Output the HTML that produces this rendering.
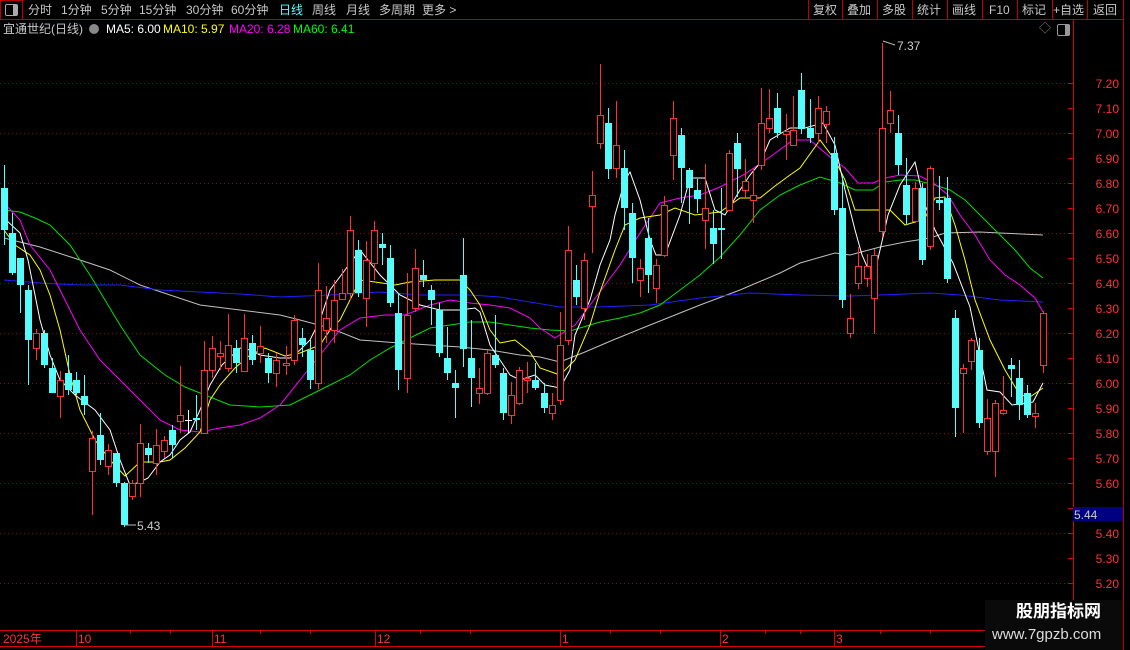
<!DOCTYPE html><html><head><meta charset="utf-8"><style>
body{margin:0;background:#000;width:1130px;height:650px;overflow:hidden;font-family:"Liberation Sans","Noto Sans CJK SC",sans-serif;}
.t{position:absolute;font-size:12px;color:#c8c8c8;white-space:nowrap;line-height:14px}
</style></head><body>
<div style="position:absolute;left:0;top:0;width:1130px;height:650px">
<div style="position:absolute;left:0;top:0;width:21px;height:18px;border:1px solid #b00;"></div>
<div style="position:absolute;left:5px;top:4px;width:11px;height:10px;border:1px solid #aaa;border-radius:2px"><div style="position:absolute;right:0;top:0;width:4px;height:10px;background:#aaa"></div></div>
<div style="position:absolute;left:0;top:19px;width:1123px;height:1px;background:#b00"></div>
<div style="position:absolute;left:1123px;top:0;width:1px;height:650px;background:#b00"></div>
<svg width="1130" height="20" style="position:absolute;left:0;top:0"><path stroke="#b00" d="M808.5 0V19M842.5 0V19M877.5 0V19M912.5 0V19M947.5 0V19M982.5 0V19M1017.5 0V19M1052.5 0V19M1087.5 0V19"/></svg>
<div class="t" style="left:28px;top:3px">分时</div>
<div class="t" style="left:61px;top:3px">1分钟</div>
<div class="t" style="left:101px;top:3px">5分钟</div>
<div class="t" style="left:139px;top:3px">15分钟</div>
<div class="t" style="left:186px;top:3px">30分钟</div>
<div class="t" style="left:231px;top:3px">60分钟</div>
<div class="t" style="left:279px;top:3px;color:#54ffff">日线</div>
<div class="t" style="left:312px;top:3px">周线</div>
<div class="t" style="left:346px;top:3px">月线</div>
<div class="t" style="left:379px;top:3px">多周期</div>
<div class="t" style="left:422px;top:3px">更多 &gt;</div>
<div class="t" style="left:813px;top:3px">复权</div>
<div class="t" style="left:847px;top:3px">叠加</div>
<div class="t" style="left:882px;top:3px">多股</div>
<div class="t" style="left:917px;top:3px">统计</div>
<div class="t" style="left:952px;top:3px">画线</div>
<div class="t" style="left:989px;top:3px">F10</div>
<div class="t" style="left:1022px;top:3px">标记</div>
<div class="t" style="left:1053px;top:3px">+自选</div>
<div class="t" style="left:1093px;top:3px">返回</div>
<div class="t" style="left:3px;top:22px">宜通世纪(日线)</div>
<div style="position:absolute;left:89px;top:24px;width:10px;height:10px;border-radius:50%;background:#888"></div>
<div class="t" style="left:106px;top:22px;color:#fff">MA5: 6.00</div>
<div class="t" style="left:163px;top:22px;color:#ff0">MA10: 5.97</div>
<div class="t" style="left:229px;top:22px;color:#f0f">MA20: 6.28</div>
<div class="t" style="left:293px;top:22px;color:#0f0">MA60: 6.41</div>
<div class="t" style="left:1039px;top:21px;color:#888">◇</div>
<div style="position:absolute;left:1057px;top:24px;width:11px;height:10px;border:1px solid #999;border-radius:2px"><div style="position:absolute;right:0;top:0;width:4px;height:10px;background:#999"></div></div>
<svg width="1130" height="650" style="position:absolute;left:0;top:0">
<g stroke="#7a1010" stroke-dasharray="1,3">
<path d="M0 83.5H1073M0 133.5H1073M0 183.5H1073M0 233.5H1073M0 283.5H1073M0 333.5H1073M0 383.5H1073M0 433.5H1073M0 483.5H1073M0 533.5H1073M0 583.5H1073"/>
</g>
<path d="M1073.5 20V628" stroke="#d00"/>
<path stroke="#d00" d="M1068 83.5h5M1068 108.5h5M1068 133.5h5M1068 158.5h5M1068 183.5h5M1068 208.5h5M1068 233.5h5M1068 258.5h5M1068 283.5h5M1068 308.5h5M1068 333.5h5M1068 358.5h5M1068 383.5h5M1068 408.5h5M1068 433.5h5M1068 458.5h5M1068 483.5h5M1068 508.5h5M1068 533.5h5M1068 558.5h5M1068 583.5h5"/>
<g fill="#ff3232" font-size="12" font-family="Liberation Sans,sans-serif" text-anchor="end">
<text x="1119" y="88">7.20</text><text x="1119" y="113">7.10</text><text x="1119" y="138">7.00</text><text x="1119" y="163">6.90</text><text x="1119" y="188">6.80</text><text x="1119" y="213">6.70</text><text x="1119" y="238">6.60</text><text x="1119" y="263">6.50</text><text x="1119" y="288">6.40</text><text x="1119" y="313">6.30</text><text x="1119" y="338">6.20</text><text x="1119" y="363">6.10</text><text x="1119" y="388">6.00</text><text x="1119" y="413">5.90</text><text x="1119" y="438">5.80</text><text x="1119" y="463">5.70</text><text x="1119" y="488">5.60</text><text x="1119" y="538">5.40</text><text x="1119" y="563">5.30</text><text x="1119" y="588">5.20</text>
</g>
<rect x="1073" y="507" width="50" height="14" fill="#000080"/>
<text x="1074" y="519" fill="#ccc" font-size="12" font-family="Liberation Sans,sans-serif">5.44</text>
<path d="M0 630.5H985M0 646.5H985" stroke="#d00"/>
<path d="M76.5 630V646M212.5 630V646M375.5 630V646M560.5 630V646M720.5 630V646M834.5 630V646M130.5 631v3M170.5 631v3M260.5 631v3M310.5 631v3M420.5 631v3M470.5 631v3M610.5 631v3M660.5 631v3M765.5 631v3M800.5 631v3M880.5 631v3M930.5 631v3" stroke="#d00"/>
<g fill="#ff3232" font-size="12" font-family="Liberation Sans,Noto Sans CJK SC,sans-serif">
<text x="3" y="643">2025年</text><text x="78" y="643">10</text><text x="214" y="643">11</text><text x="377" y="643">12</text><text x="562" y="643">1</text><text x="722" y="643">2</text><text x="836" y="643">3</text>
</g>
<g fill="none" stroke-width="1">
<polyline stroke="#c0c0c0" points="4,238 40,247 80,260 110,270 140,285 170,295 200,305 240,310 280,315 300,320 330,328 360,340 400,343 430,345 460,347 490,350 520,355 540,357 560,362 585,352 613,340 650,325 700,305 740,290 780,273 800,263 835,253 850,255 880,247 905,242 930,238 945,233 980,232 1000,233 1043,235"/>
<polyline stroke="#2020ff" points="4,280 40,283 80,285 120,285 160,290 200,292 240,294 280,297 330,295 380,292 420,295 470,295 500,297 560,307 600,307 650,305 700,298 750,293 800,295 850,296 880,295 930,293 960,295 1000,300 1043,302"/>
<polyline stroke="#00e000" points="4,210 20,212 35,218 50,225 70,245 90,275 105,300 120,325 140,355 165,375 185,387 210,397 230,405 260,407 290,405 310,395 330,385 350,375 370,360 390,348 410,338 430,328 450,325 470,322 490,322 510,325 530,328 550,330 570,331 600,322 620,318 640,313 660,305 680,290 700,275 720,257 740,235 760,210 780,195 800,185 820,177 840,183 855,190 873,190 885,182 900,180 915,180 935,185 950,190 965,200 985,220 1000,235 1015,250 1030,268 1043,278"/>
<polyline stroke="#f0f" points="4,203 20,220 30,245 50,270 65,300 80,330 100,360 120,380 140,400 160,420 180,430 200,432 220,428 240,425 260,418 280,405 300,380 320,355 340,330 360,318 385,315 405,315 430,305 450,300 470,303 490,305 510,308 530,318 540,328 555,338 575,325 590,305 605,285 620,265 640,233 660,203 680,198 700,195 720,187 745,174 770,157 793,140 810,140 830,157 845,168 858,183 873,183 885,178 900,175 920,176 935,184 948,195 960,215 975,235 990,260 1005,275 1020,285 1035,298 1043,312"/>
<polyline stroke="#ff0" points="4,230 15,245 30,255 40,270 50,295 60,330 70,375 80,410 95,440 110,460 125,476 140,462 160,462 170,460 185,448 200,432 210,400 220,385 235,368 250,355 265,348 285,356 300,353 320,345 330,330 340,320 350,300 360,280 375,282 395,285 410,282 435,280 460,280 470,290 480,305 490,330 500,343 515,340 530,352 540,368 560,375 575,360 590,325 600,292 615,250 625,225 640,218 660,215 675,208 695,215 720,212 740,198 760,198 775,186 790,175 800,168 820,140 835,160 845,180 855,210 873,210 890,210 905,225 915,222 925,218 935,198 945,197 955,225 965,260 975,300 990,340 1005,370 1020,395 1030,397 1043,388"/>
<polyline stroke="#fff" points="4,218 20,233 28,260 40,320 50,355 60,380 75,395 95,410 110,430 120,460 130,485 140,482 148,478 160,462 170,455 180,440 190,432 200,410 210,385 222,365 240,348 250,350 260,355 280,358 290,358 300,350 310,340 320,320 330,290 345,270 360,250 380,275 400,295 420,305 440,310 460,310 475,308 480,312 490,345 500,360 510,375 520,380 535,375 545,385 560,388 570,370 575,335 590,300 600,265 610,240 615,215 625,180 630,172 640,200 650,240 656,255 665,255 680,215 690,178 705,178 715,210 725,215 740,190 750,175 760,163 770,140 790,128 805,128 823,123 835,145 845,190 855,230 862,255 873,280 880,250 888,215 900,185 915,162 925,205 935,230 953,263 970,307 987,390 1000,392 1012,405 1033,402 1043,383"/>
</g>
<path stroke="#54ffff" d="M4.5 165V245M12.5 213V275M20.5 258V313M28.5 285V385M44.5 330V368M52.5 358V393M68.5 355V395M76.5 372V395M84.5 375V415M100.5 413V465M116.5 453V487M124.5 482V527M148.5 443V463M172.5 425V458M196.5 395V430M236.5 340V373M252.5 335V365M268.5 353V383M302.5 328V357M310.5 340V389M358.5 240V297M382.5 233V265M390.5 245V307M398.5 293V390M423.5 260V287M431.5 285V325M439.5 303V357M447.5 327V380M455.5 370V418M463.5 238V367M471.5 320V407M495.5 315V368M503.5 368V420M535.5 363V390M544.5 383V413M576.5 265V305M608.5 108V179M624.5 150V230M632.5 203V283M648.5 218V293M681.5 128V203M689.5 168V224M697.5 179V213M713.5 210V264M721.5 188V259M737.5 133V197M777.5 93V138M801.5 73V134M810.5 99V143M834.5 137V215M842.5 175V308M898.5 115V175M906.5 158V225M922.5 183V265M939.5 176V210M947.5 177V283M955.5 310V437M979.5 338V428M1011.5 358V397M1019.5 360V420M1027.5 385V418"/>
<path stroke="#ff3232" d="M36.5 329V360M60.5 371V418M92.5 431V515M108.5 444V475M132.5 480V500M140.5 424V497M156.5 429V475M164.5 436V458M180.5 366V433M204.5 341V433M212.5 336V378M220.5 341V370M228.5 314V372M244.5 314V371M260.5 326V363M276.5 353V387M286.5 346V375M294.5 315V365M318.5 263V389M326.5 286V343M334.5 280V343M342.5 269V300M350.5 216V300M366.5 241V327M374.5 221V280M407.5 273V393M415.5 249V312M479.5 368V404M487.5 350V395M511.5 382V424M519.5 367V405M527.5 362V393M552.5 393V420M560.5 312V405M568.5 226V345M584.5 253V320M592.5 171V253M600.5 64V149M616.5 101V178M640.5 259V297M656.5 259V303M664.5 196V257M673.5 101V180M705.5 164V249M729.5 150V210M745.5 159V197M753.5 168V223M761.5 88V170M769.5 89V133M786.5 114V160M793.5 96V146M818.5 96V143M826.5 106V143M850.5 294V338M858.5 247V289M867.5 254V287M874.5 249V334M882.5 43V237M890.5 91V133M915.5 182V223M930.5 166V250M963.5 364V433M971.5 338V370M987.5 399V455M995.5 400V477M1003.5 376V415M1035.5 403V428M1043.5 311V373"/>
<path stroke="#fff" d="M188.5 410V433M185 420.5H192"/>
<g fill="#54fcfc">
<rect x="1" y="188" width="7" height="42"/><rect x="9" y="233" width="7" height="40"/><rect x="17" y="258" width="7" height="27"/><rect x="25" y="290" width="7" height="50"/><rect x="41" y="333" width="7" height="32"/><rect x="49" y="368" width="7" height="25"/><rect x="65" y="373" width="7" height="17"/><rect x="73" y="380" width="7" height="13"/><rect x="81" y="396" width="7" height="9"/><rect x="97" y="435" width="7" height="25"/><rect x="113" y="453" width="7" height="30"/><rect x="121" y="483" width="7" height="42"/><rect x="145" y="448" width="7" height="7"/><rect x="169" y="430" width="7" height="15"/><rect x="193" y="418" width="7" height="2"/><rect x="233" y="348" width="7" height="15"/><rect x="249" y="343" width="7" height="17"/><rect x="265" y="358" width="7" height="15"/><rect x="299" y="338" width="7" height="7"/><rect x="307" y="350" width="7" height="30"/><rect x="355" y="250" width="7" height="43"/><rect x="379" y="244" width="7" height="4"/><rect x="387" y="258" width="7" height="45"/><rect x="395" y="313" width="7" height="57"/><rect x="420" y="275" width="7" height="5"/><rect x="428" y="290" width="7" height="10"/><rect x="436" y="310" width="7" height="43"/><rect x="444" y="358" width="7" height="15"/><rect x="452" y="383" width="7" height="5"/><rect x="460" y="275" width="7" height="74"/><rect x="468" y="358" width="7" height="20"/><rect x="492" y="355" width="7" height="10"/><rect x="500" y="373" width="7" height="40"/><rect x="532" y="380" width="7" height="8"/><rect x="541" y="393" width="7" height="15"/><rect x="573" y="280" width="7" height="17"/><rect x="605" y="123" width="7" height="46"/><rect x="621" y="168" width="7" height="40"/><rect x="629" y="213" width="7" height="45"/><rect x="645" y="238" width="7" height="37"/><rect x="678" y="135" width="7" height="33"/><rect x="686" y="170" width="7" height="18"/><rect x="694" y="190" width="7" height="9"/><rect x="710" y="228" width="7" height="16"/><rect x="718" y="228" width="7" height="2"/><rect x="734" y="143" width="7" height="26"/><rect x="774" y="108" width="7" height="25"/><rect x="798" y="90" width="7" height="39"/><rect x="807" y="128" width="7" height="10"/><rect x="831" y="153" width="7" height="57"/><rect x="839" y="208" width="7" height="92"/><rect x="895" y="133" width="7" height="32"/><rect x="903" y="185" width="7" height="30"/><rect x="919" y="188" width="7" height="72"/><rect x="936" y="200" width="7" height="3"/><rect x="944" y="198" width="7" height="81"/><rect x="952" y="318" width="7" height="90"/><rect x="976" y="350" width="7" height="73"/><rect x="1008" y="365" width="7" height="4"/><rect x="1016" y="378" width="7" height="27"/><rect x="1024" y="393" width="7" height="22"/>
</g>
<g fill="#000" stroke="#ff3232">
<rect x="33.5" y="333.5" width="6" height="15"/><rect x="57.5" y="380.5" width="6" height="16"/><rect x="89.5" y="438.5" width="6" height="33"/><rect x="105.5" y="450.5" width="6" height="16"/><rect x="129.5" y="483.5" width="6" height="13"/><rect x="137.5" y="443.5" width="6" height="40"/><rect x="153.5" y="445.5" width="6" height="18"/><rect x="161.5" y="440.5" width="6" height="11"/><rect x="177.5" y="415.5" width="6" height="6"/><rect x="201.5" y="370.5" width="6" height="63"/><rect x="209.5" y="348.5" width="6" height="22"/><rect x="217.5" y="353.5" width="6" height="3"/><rect x="225.5" y="345.5" width="6" height="23"/><rect x="241.5" y="338.5" width="6" height="33"/><rect x="257.5" y="346.5" width="6" height="7"/><rect x="273.5" y="360.5" width="6" height="13"/><rect x="283.5" y="363.5" width="6" height="2"/><rect x="291.5" y="320.5" width="6" height="40"/><rect x="315.5" y="290.5" width="6" height="93"/><rect x="323.5" y="318.5" width="6" height="12"/><rect x="331.5" y="300.5" width="6" height="30"/><rect x="339.5" y="293.5" width="6" height="6"/><rect x="347.5" y="230.5" width="6" height="63"/><rect x="363.5" y="260.5" width="6" height="38"/><rect x="371.5" y="230.5" width="6" height="33"/><rect x="404.5" y="315.5" width="6" height="63"/><rect x="412.5" y="268.5" width="6" height="40"/><rect x="476.5" y="388.5" width="6" height="5"/><rect x="484.5" y="353.5" width="6" height="40"/><rect x="508.5" y="395.5" width="6" height="20"/><rect x="516.5" y="370.5" width="6" height="33"/><rect x="524.5" y="378.5" width="6" height="2"/><rect x="549.5" y="405.5" width="6" height="8"/><rect x="557.5" y="345.5" width="6" height="55"/><rect x="565.5" y="250.5" width="6" height="90"/><rect x="581.5" y="260.5" width="6" height="48"/><rect x="589.5" y="195.5" width="6" height="11"/><rect x="597.5" y="115.5" width="6" height="28"/><rect x="613.5" y="145.5" width="6" height="23"/><rect x="637.5" y="268.5" width="6" height="12"/><rect x="653.5" y="265.5" width="6" height="23"/><rect x="661.5" y="205.5" width="6" height="50"/><rect x="670.5" y="118.5" width="6" height="37"/><rect x="702.5" y="208.5" width="6" height="12"/><rect x="726.5" y="153.5" width="6" height="57"/><rect x="742.5" y="181.5" width="6" height="9"/><rect x="750.5" y="195.5" width="6" height="5"/><rect x="758.5" y="123.5" width="6" height="42"/><rect x="766.5" y="118.5" width="6" height="10"/><rect x="783.5" y="131.5" width="6" height="3"/><rect x="790.5" y="130.5" width="6" height="15"/><rect x="815.5" y="108.5" width="6" height="25"/><rect x="823.5" y="111.5" width="6" height="13"/><rect x="847.5" y="318.5" width="6" height="15"/><rect x="855.5" y="266.5" width="6" height="17"/><rect x="864.5" y="266.5" width="6" height="12"/><rect x="871.5" y="255.5" width="6" height="43"/><rect x="879.5" y="128.5" width="6" height="103"/><rect x="887.5" y="110.5" width="6" height="13"/><rect x="912.5" y="188.5" width="6" height="33"/><rect x="927.5" y="168.5" width="6" height="78"/><rect x="960.5" y="368.5" width="6" height="5"/><rect x="968.5" y="340.5" width="6" height="21"/><rect x="984.5" y="418.5" width="6" height="33"/><rect x="992.5" y="403.5" width="6" height="48"/><rect x="1000.5" y="410.5" width="6" height="3"/><rect x="1032.5" y="413.5" width="6" height="3"/><rect x="1040.5" y="313.5" width="6" height="52"/>
</g>
<path d="M883 41l12 4M124 525h12" stroke="#bbb" fill="none"/>
<g fill="#ccc" font-size="12" font-family="Liberation Sans,sans-serif"><text x="897" y="50">7.37</text><text x="137" y="530">5.43</text></g>
</svg>
<div style="position:absolute;left:985px;top:600px;width:138px;height:50px;background:#0a0a0a"></div>
<div class="t" style="left:1016px;top:602px;font-size:17px;line-height:20px;color:#fff;font-weight:bold">股朋指标网</div>
<div class="t" style="left:992px;top:626px;font-size:15px;line-height:18px;color:#ddd">www.7gpzb.com</div>
</div>
</body></html>
